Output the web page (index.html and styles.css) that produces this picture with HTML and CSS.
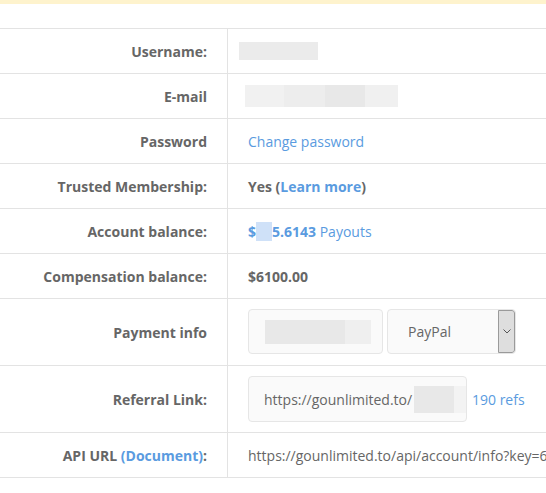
FILE: index.html
```html
<!DOCTYPE html>
<html lang="en">
<head>
    <meta charset="UTF-8">
    <meta name="viewport" content="width=device-width, initial-scale=1.0">
    <title>My Account</title>
    <link rel="stylesheet" href="styles.css">
</head>
<body>

<div class="notice"></div>

<div class="account">
    <div class="row">
        <div class="label">Username:</div>
        <div class="value"><span class="hidden hidden-user"></span></div>
    </div>
    <div class="row">
        <div class="label">E-mail</div>
        <div class="value"><span class="hidden hidden-mail"></span></div>
    </div>
    <div class="row">
        <div class="label">Password</div>
        <div class="value"><a href="#" class="link">Change password</a></div>
    </div>
    <div class="row">
        <div class="label">Trusted Membership:</div>
        <div class="value"><b>Yes (<a href="#" class="link">Learn more</a>)</b></div>
    </div>
    <div class="row">
        <div class="label">Account balance:</div>
        <div class="value">
            <a href="#" class="link"><b>$<span class="hidden-blue"></span>5.6143</b> Payouts</a>
        </div>
    </div>
    <div class="row">
        <div class="label">Compensation balance:</div>
        <div class="value"><b>$6100.00</b></div>
    </div>
    <div class="row row-form">
        <div class="label">Payment info</div>
        <div class="value">
            <div class="field field-pay"><span class="hidden hidden-pay"></span></div>
            <div class="field select">
                <span>PayPal</span>
                <span class="select-arrow">
                    <svg width="8" height="5" viewBox="0 0 8 5"><polyline points="0.5,0.5 4,4 7.5,0.5" fill="none" stroke="#555" stroke-width="1"/></svg>
                </span>
            </div>
        </div>
    </div>
    <div class="row row-form row-ref">
        <div class="label">Referral Link:</div>
        <div class="value">
            <div class="field field-ref">https://gounlimited.to/<span class="hidden hidden-ref"></span></div>
            <a href="#" class="link refs">190 refs</a>
        </div>
    </div>
    <div class="row">
        <div class="label">API URL&nbsp;<a href="#" class="link">(Document)</a>:</div>
        <div class="value">https://gounlimited.to/api/account/info?key=6a0f2c81d93e47b5</div>
    </div>
</div>

</body>
</html>
```

FILE: styles.css
```css
html, body {
    overflow: hidden;
}
body {
    margin: 0;
    font-family: "Open Sans", Arial, sans-serif;
    font-size: 14px;
    color: #666;
    background-color: #fff;
}
.notice {
    height: 4px;
    background-color: #fef3cd;
}
.account {
    margin-top: 24px;
    width: 760px;
    border-top: 1px solid #e3e3e3;
}
.row {
    display: flex;
    min-height: 44px;
    border-bottom: 1px solid #e3e3e3;
}
.label {
    flex: 0 0 207px;
    padding-right: 20px;
    border-right: 1px solid #e3e3e3;
    display: flex;
    align-items: center;
    justify-content: flex-end;
    font-weight: 700;
    white-space: nowrap;
}
.value {
    flex: 1;
    padding: 0 20px;
    display: flex;
    align-items: center;
    white-space: nowrap;
}
.row-form .value {
    padding-top: 10px;
    padding-bottom: 11px;
}
.row-ref .value {
    padding-bottom: 10px;
}
.link {
    color: #5a9be0;
    text-decoration: none;
}
.hidden {
    display: inline-block;
    background-color: #ebebeb;
}
.hidden-user {
    width: 79px;
    height: 18px;
    margin-left: -9px;
}
.hidden-mail {
    width: 153px;
    height: 22px;
    margin-left: -3px;
    background: linear-gradient(90deg, #f1f1f1 0, #f1f1f1 39px, #ededed 39px, #ededed 80px, #e8e8e8 80px, #e8e8e8 120px, #f0f0f0 120px);
}
.hidden-blue {
    display: inline-block;
    width: 16px;
    height: 19px;
    vertical-align: -4px;
    background-color: #cfe1f8;
}
.field {
    box-sizing: border-box;
    height: 45px;
    background-color: #fafafa;
    border: 1px solid #e6e6e6;
    border-radius: 4px;
    display: flex;
    align-items: center;
}
.field-pay {
    width: 135px;
    padding-left: 16px;
}
.hidden-pay {
    width: 106px;
    height: 24px;
    background: linear-gradient(90deg, #e8e8e8 0, #e8e8e8 80px, #efefef 80px);
}
.select {
    width: 129px;
    margin-left: 4px;
    padding-left: 20px;
    justify-content: space-between;
    overflow: hidden;
}
.select-arrow {
    box-sizing: border-box;
    width: 17px;
    height: 43px;
    background-color: #dedede;
    border: 1px solid #9a9a9a;
    border-radius: 0 3px 3px 0;
    display: flex;
    align-items: center;
    justify-content: center;
}
.field-ref {
    width: 219px;
    height: 46px;
    padding-left: 15px;
}
.hidden-ref {
    width: 63px;
    height: 27px;
    margin-left: 2px;
    background: linear-gradient(90deg, #e8e8e8 0, #e8e8e8 40px, #f3f3f3 40px);
}
.refs {
    margin-left: 5px;
}
```
